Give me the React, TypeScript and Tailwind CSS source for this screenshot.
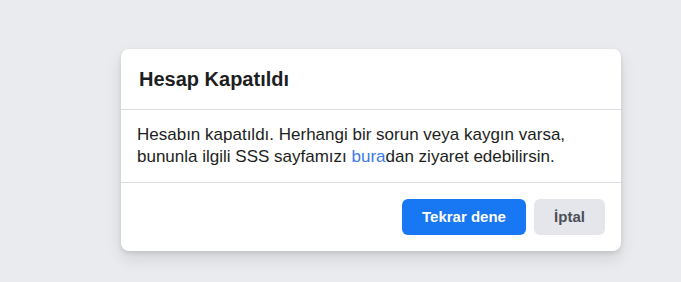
export default function App() {
  return (
    <div className="min-h-[282px] w-full bg-[#e9ebee] pl-[121px] pt-[49px]" style={{ fontFamily: '"Liberation Sans", Arial, sans-serif' }}>
      <div className="w-[500px] rounded-lg bg-white shadow-[0_2px_4px_rgba(0,0,0,0.1),0_8px_16px_rgba(0,0,0,0.1)]">
        <div className="flex h-[61px] items-center border-b border-[#dadde1] pl-[18px] pr-4">
          <h2 className="text-[20px] font-bold leading-6 text-[#1c1e21]">Hesap Kapatıldı</h2>
        </div>
        <div className="border-b border-[#dadde1] px-4 py-[14px] text-[17px] leading-[22px] text-[#1c1e21]">
          Hesabın kapatıldı. Herhangi bir sorun veya kaygın varsa, bununla ilgili SSS sayfamızı <span className="text-[#3b7ae6]">bura</span>dan ziyaret edebilirsin.
        </div>
        <div className="flex justify-end gap-2 p-4">
          <button className="h-9 w-[124px] rounded-md bg-[#1877f2] text-[15px] font-bold text-white">Tekrar dene</button>
          <button className="h-9 w-[71px] rounded-md bg-[#e4e6eb] text-[15px] font-bold text-[#4b4f56]">İptal</button>
        </div>
      </div>
    </div>
  );
}
